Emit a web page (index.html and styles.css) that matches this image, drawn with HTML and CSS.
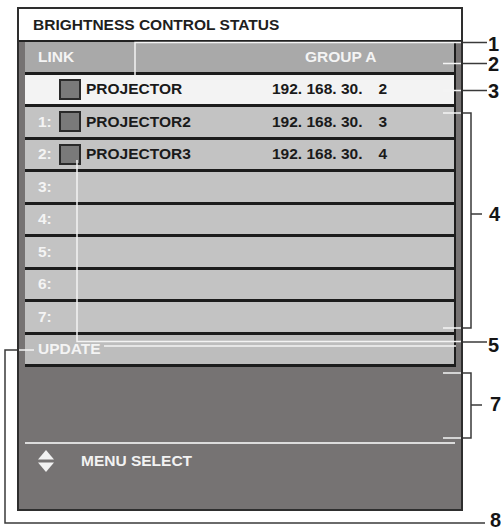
FILE: index.html
```html
<!DOCTYPE html>
<html>
<head>
<meta charset="utf-8">
<link rel="stylesheet" href="styles.css">
</head>
<body>
<div class="page">
  <div class="panel">
    <div class="title">BRIGHTNESS CONTROL STATUS</div>
    <div class="body">
      <div class="list">
        <div class="row head"><span class="link">LINK</span><span class="group">GROUP A</span></div>
        <div class="row self"><span class="num"></span><span class="sq"></span><span class="name">PROJECTOR</span><span class="ip">192. 168. 30.   &#8201;2</span></div>
        <div class="row"><span class="num">1:</span><span class="sq"></span><span class="name">PROJECTOR2</span><span class="ip">192. 168. 30.   &#8201;3</span></div>
        <div class="row"><span class="num">2:</span><span class="sq"></span><span class="name">PROJECTOR3</span><span class="ip">192. 168. 30.   &#8201;4</span></div>
        <div class="row"><span class="num">3:</span></div>
        <div class="row"><span class="num">4:</span></div>
        <div class="row"><span class="num">5:</span></div>
        <div class="row"><span class="num">6:</span></div>
        <div class="row"><span class="num">7:</span></div>
        <div class="row update"><span class="num">UPDATE</span></div>
      </div>
      <div class="guide">
        <div class="guide-line"></div>
        <div class="menu">
          <svg class="arrows" width="16" height="22" viewBox="0 0 16 22">
            <path d="M0 9.5 L8 0 L16 9.5 Z" fill="#f2f2f2"/>
            <path d="M0 12.5 L16 12.5 L8 22 Z" fill="#f2f2f2"/>
          </svg>
          <span>MENU SELECT</span>
        </div>
      </div>
    </div>
  </div>

  <svg class="leaders" width="501" height="532" viewBox="0 0 501 532">
    <g stroke="#f4f4f4" stroke-width="1.5" fill="none">
      <path d="M135 75 V42.5 H461"/>
      <path d="M443 63.5 H461"/>
      <path d="M443 90.5 H461"/>
      <path d="M443 113 H461"/>
      <path d="M443 328 H461"/>
      <path d="M77 160 V341.5 H461"/>
      <path d="M104 346 H456"/>
      <path d="M443 373 H461"/>
      <path d="M443 438 H461"/>
      <path d="M19 350 H34"/>
    </g>
    <g stroke="#3a3a3a" stroke-width="1.5" fill="none">
      <path d="M463 42.5 H487"/>
      <path d="M463 63.5 H487"/>
      <path d="M463 90.5 H487"/>
      <path d="M463 113 H471 V328 H463"/>
      <path d="M471 214 H482"/>
      <path d="M463 342 H487"/>
      <path d="M463 373 H471 V438 H463"/>
      <path d="M471 405 H482"/>
      <path d="M17 350 H5 V523 H485"/>
    </g>
  </svg>
  <span class="label l1">1</span>
  <span class="label l2">2</span>
  <span class="label l3">3</span>
  <span class="label l4">4</span>
  <span class="label l5">5</span>
  <span class="label l7">7</span>
  <span class="label l8">8</span>
</div>
</body>
</html>
```

FILE: styles.css
```css
* {
  box-sizing: border-box;
}

html,
body {
  margin: 0;
  padding: 0;
  background: #ffffff;
}

body {
  font-family: "Liberation Sans", Arial, sans-serif;
  font-weight: bold;
}

.page {
  position: relative;
  width: 501px;
  height: 532px;
  padding: 7px 0 0 17px;
  overflow: hidden;
}

.panel {
  width: 446px;
  border: 2px solid #2e2e2e;
}

.title {
  height: 33px;
  border-bottom: 2px solid #222222;
  background: #ffffff;
  padding-left: 14px;
  font-size: 15.5px;
  color: #1e1e1e;
  display: flex;
  align-items: center;
}

.body {
  background: #767373;
  padding: 0 5px 0 6px;
}

.list {
  display: flex;
  flex-direction: column;
}

.row {
  height: 32.5px;
  border-bottom: 3px solid #1c1c1c;
  border-right: 2px solid #1c1c1c;
  background: #c3c3c3;
  display: flex;
  align-items: center;
  padding-left: 13px;
  font-size: 15.5px;
  color: #1a1a1a;
}

.row.head {
  background: #a9a9a9;
  color: #f4f4f4;
}

.row.self {
  background: #f3f3f3;
}

.row.update {
  background: #bdbdbd;
}

.link {
  width: 267px;
}

.num {
  width: 21px;
  color: #f4f4f4;
  flex: none;
}

.update .num {
  width: auto;
}

.sq {
  width: 22px;
  height: 21px;
  border: 2px solid #2a2a2a;
  background: #7a7a7a;
  margin-right: 5px;
  flex: none;
}

.name {
  width: 186px;
  flex: none;
}

.ip {
  white-space: pre;
}

.guide {
  height: 142px;
  padding-top: 75px;
}

.guide-line {
  width: 430px;
  height: 2px;
  background: #dcdcdc;
}

.menu {
  height: 34px;
  display: flex;
  align-items: center;
  padding-left: 13px;
  color: #f2f2f2;
  font-size: 15.5px;
}

.arrows {
  margin-right: 27px;
  display: block;
}

.leaders {
  position: absolute;
  left: 0;
  top: 0;
  pointer-events: none;
}

.label {
  position: absolute;
  left: 488px;
  font-size: 20px;
  line-height: 20px;
  color: #151515;
}

.l1 { top: 34px; }
.l2 { top: 54px; }
.l3 { top: 81px; }
.l4 { top: 204px; left: 489px; }
.l5 { top: 335px; }
.l7 { top: 394px; left: 490px; }
.l8 { top: 510px; left: 490px; }
```
